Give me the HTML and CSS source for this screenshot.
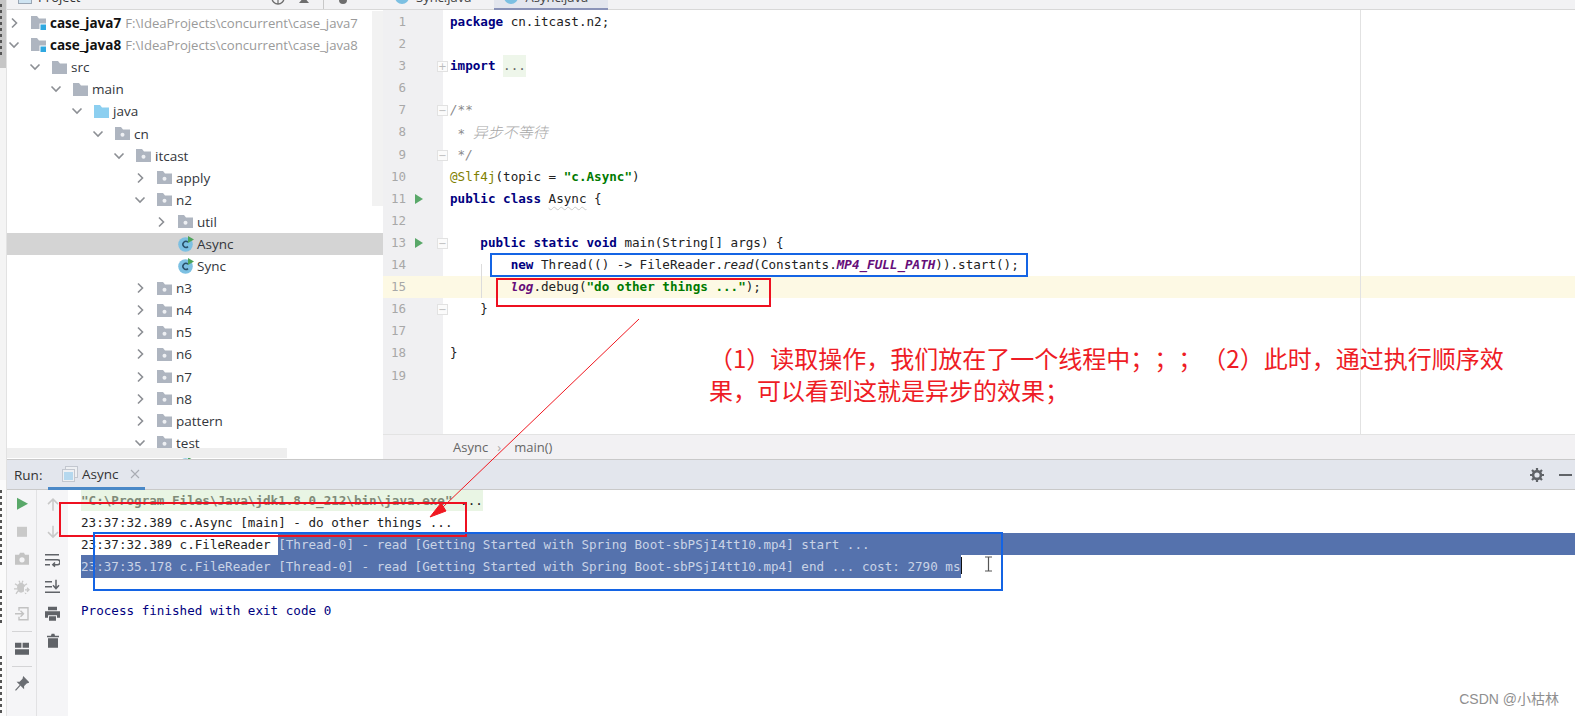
FILE: index.html
```html
<!DOCTYPE html>
<html lang="zh">
<head>
<meta charset="utf-8">
<title>Async.java</title>
<link rel="stylesheet" href="styles.css">
</head>
<body>
<svg class="defs" width="0" height="0" aria-hidden="true">
  <symbol id="chev-r" viewBox="0 0 12 12"><path d="M4 1.5 8.5 6 4 10.5" fill="none" stroke="#8c8f94" stroke-width="1.6"/></symbol>
  <symbol id="chev-d" viewBox="0 0 12 12"><path d="M1.5 3.5 6 8 10.5 3.5" fill="none" stroke="#8c8f94" stroke-width="1.6"/></symbol>
  <symbol id="folder" viewBox="0 0 15 13"><path d="M0 0H6L8 2.5H15V13H0Z" fill="#aeb5c0"/></symbol>
  <symbol id="pkg" viewBox="0 0 15 13"><path d="M0 0H6L8 2.5H15V13H0Z" fill="#aeb5c0"/><circle cx="7.5" cy="7.8" r="2" fill="#eef0f3"/></symbol>
  <symbol id="src" viewBox="0 0 15 13"><path d="M0 0H6L8 2.5H15V13H0Z" fill="#8ccff0"/></symbol>
  <symbol id="module" viewBox="0 0 15 15"><path d="M0 0H6L8 2.5H15V13H0Z" fill="#aeb5c0"/><rect x="9" y="8" width="6.5" height="6.5" fill="#2fa8e0" stroke="#fff"/></symbol>
  <symbol id="cls" viewBox="0 0 16 16"><circle cx="7.5" cy="8.5" r="7.3" fill="#7cc0e2"/><path d="M10 6.2A3 3 0 1 0 10 10.600" fill="none" stroke="#29506a" stroke-width="1.5"/><path d="M10 0 16 3.5 10 7Z" fill="#4ca35a"/></symbol>
</svg>
<div class="app">
  <aside class="strip">
    <div class="strip-top"><i class="dash dash-a"></i></div>
    <div class="strip-mid"></div>
    <div class="strip-low"><i class="dash dash-b"></i><i class="dash dash-c"></i><i class="dash dash-d"></i></div>
  </aside>
  <div class="main">
    <div class="top">
      <section class="project">
        <header class="proj-head">
          <span class="proj-title"><span class="proj-icon"></span>Project</span>
          <span class="proj-tools">
            <svg class="tool-ic" width="14" height="14" viewBox="0 0 14 14"><circle cx="7" cy="7" r="6" fill="none" stroke="#6e6e6e" stroke-width="1.4"/><path d="M7 1V13M1 7H13" stroke="#6e6e6e" stroke-width="1.2"/></svg>
            <svg class="tool-ic" width="14" height="14" viewBox="0 0 14 14"><path d="M2 12H12L7 6Z" fill="#6e6e6e"/></svg>
            <i class="tool-sep"></i>
            <svg class="tool-ic" width="14" height="14" viewBox="0 0 14 14"><circle cx="7" cy="9" r="4" fill="#6e6e6e"/></svg>
          </span>
        </header>
        <div class="tree">
          <div class="row d0"><svg class="chev"><use href="#chev-r"/></svg><svg class="ic mod"><use href="#module"/></svg><b class="mod-name">case_java7</b><span class="path">F:\IdeaProjects\concurrent\case_java7</span></div>
          <div class="row d0"><svg class="chev"><use href="#chev-d"/></svg><svg class="ic mod"><use href="#module"/></svg><b class="mod-name">case_java8</b><span class="path">F:\IdeaProjects\concurrent\case_java8</span></div>
          <div class="row d1"><svg class="chev"><use href="#chev-d"/></svg><svg class="ic"><use href="#folder"/></svg>src</div>
          <div class="row d2"><svg class="chev"><use href="#chev-d"/></svg><svg class="ic"><use href="#folder"/></svg>main</div>
          <div class="row d3"><svg class="chev"><use href="#chev-d"/></svg><svg class="ic"><use href="#src"/></svg>java</div>
          <div class="row d4"><svg class="chev"><use href="#chev-d"/></svg><svg class="ic"><use href="#pkg"/></svg>cn</div>
          <div class="row d5"><svg class="chev"><use href="#chev-d"/></svg><svg class="ic"><use href="#pkg"/></svg>itcast</div>
          <div class="row d6"><svg class="chev"><use href="#chev-r"/></svg><svg class="ic"><use href="#pkg"/></svg>apply</div>
          <div class="row d6"><svg class="chev"><use href="#chev-d"/></svg><svg class="ic"><use href="#pkg"/></svg>n2</div>
          <div class="row d7"><svg class="chev"><use href="#chev-r"/></svg><svg class="ic"><use href="#pkg"/></svg>util</div>
          <div class="row d7 selected"><span class="chev"></span><svg class="ic cls"><use href="#cls"/></svg>Async</div>
          <div class="row d7"><span class="chev"></span><svg class="ic cls"><use href="#cls"/></svg>Sync</div>
          <div class="row d6"><svg class="chev"><use href="#chev-r"/></svg><svg class="ic"><use href="#pkg"/></svg>n3</div>
          <div class="row d6"><svg class="chev"><use href="#chev-r"/></svg><svg class="ic"><use href="#pkg"/></svg>n4</div>
          <div class="row d6"><svg class="chev"><use href="#chev-r"/></svg><svg class="ic"><use href="#pkg"/></svg>n5</div>
          <div class="row d6"><svg class="chev"><use href="#chev-r"/></svg><svg class="ic"><use href="#pkg"/></svg>n6</div>
          <div class="row d6"><svg class="chev"><use href="#chev-r"/></svg><svg class="ic"><use href="#pkg"/></svg>n7</div>
          <div class="row d6"><svg class="chev"><use href="#chev-r"/></svg><svg class="ic"><use href="#pkg"/></svg>n8</div>
          <div class="row d6"><svg class="chev"><use href="#chev-r"/></svg><svg class="ic"><use href="#pkg"/></svg>pattern</div>
          <div class="row d6"><svg class="chev"><use href="#chev-d"/></svg><svg class="ic"><use href="#pkg"/></svg>test</div>
          <div class="row d7"><span class="chev"></span><svg class="ic cls"><use href="#cls"/></svg></div>
        </div>
        <div class="vscroll"></div>
        <div class="hscroll"></div>
      </section>
      <section class="editor">
        <header class="tabs">
          <span class="tab"><i class="tab-ic"></i>Sync.java</span>
          <span class="tab active"><i class="tab-ic"></i>Async.java</span>
        </header>
        <div class="code">
          <div class="margin-line"></div>
          <div class="guide"></div>
          <div class="ln"><span class="gut">1</span><code><b class="k">package</b> cn.itcast.n2;</code></div>
          <div class="ln"><span class="gut">2</span><code></code></div>
          <div class="ln"><span class="gut">3<i class="fold">+</i></span><code><b class="k">import</b> <span class="collapsed">...</span></code></div>
          <div class="ln"><span class="gut">6</span><code></code></div>
          <div class="ln"><span class="gut">7<i class="fold">−</i></span><code><span class="c">/**</span></code></div>
          <div class="ln"><span class="gut">8</span><code><span class="c"> * <span class="c-cjk">异步不等待</span></span></code></div>
          <div class="ln"><span class="gut">9<i class="fold">−</i></span><code><span class="c"> */</span></code></div>
          <div class="ln"><span class="gut">10</span><code><span class="a">@Slf4j</span>(topic = <b class="s">"c.Async"</b>)</code></div>
          <div class="ln"><span class="gut">11<svg class="run" width="10" height="12" viewBox="0 0 10 12"><path d="M1 1 9 6 1 11Z"/></svg></span><code><b class="k">public class</b> <span class="warn">Async</span> {</code></div>
          <div class="ln"><span class="gut">12</span><code></code></div>
          <div class="ln"><span class="gut">13<svg class="run" width="10" height="12" viewBox="0 0 10 12"><path d="M1 1 9 6 1 11Z"/></svg><i class="fold">−</i></span><code>    <b class="k">public static void</b> main(String[] args) {</code></div>
          <div class="ln"><span class="gut">14</span><code>        <b class="k">new</b> Thread(() -&gt; FileReader.<em>read</em>(Constants.<b class="f">MP4_FULL_PATH</b>)).start();</code></div>
          <div class="ln current"><span class="gut">15</span><code>        <b class="f">log</b>.debug(<b class="s">"do other things ..."</b>);</code></div>
          <div class="ln"><span class="gut">16<i class="fold">−</i></span><code>    }</code></div>
          <div class="ln"><span class="gut">17</span><code></code></div>
          <div class="ln"><span class="gut">18</span><code>}</code></div>
          <div class="ln"><span class="gut">19</span><code></code></div>
        </div>
        <footer class="crumbs"><span>Async</span><span class="crumb-sep">›</span><span>main()</span></footer>
      </section>
    </div>
    <section class="run-panel">
      <header class="run-head">
        <span class="run-label">Run:</span>
        <span class="run-tab">
          <svg class="run-tab-ic" width="16" height="16" viewBox="0 0 16 16"><rect x="3.5" y="0.5" width="12" height="11" fill="#eef0f3" stroke="#c3c7cf"/><rect x="0.5" y="3.5" width="12" height="12" fill="#eef0f3" stroke="#c3c7cf"/><rect x="2" y="6" width="9" height="8" fill="#b5d8ee"/></svg>
          Async
          <svg class="run-close" width="10" height="10" viewBox="0 0 10 10"><path d="M1 1 9 9M9 1 1 9" stroke="#a9adb4" stroke-width="1.1"/></svg>
        </span>
        <span class="run-right">
          <svg width="14" height="14" viewBox="0 0 14 14"><circle cx="7" cy="7" r="3.9" fill="none" stroke="#606368" stroke-width="2.6"/><path d="M7 0V3M7 11V14M0 7H3M11 7H14M2 2 4 4M10 10 12 12M12 2 10 4M4 10 2 12" stroke="#606368" stroke-width="2.2"/></svg>
          <svg width="14" height="14" viewBox="0 0 14 14"><path d="M1 7H14" stroke="#606368" stroke-width="2"/></svg>
        </span>
      </header>
      <div class="run-body">
        <div class="tb tb-a">
          <svg width="14" height="14" viewBox="0 0 14 14"><path d="M2 1 13 7 2 13Z" fill="#59a869"/></svg>
          <svg width="14" height="14" viewBox="0 0 14 14"><rect x="2" y="2" width="10" height="10" fill="#c9c9c9"/></svg>
          <svg width="16" height="14" viewBox="0 0 16 14"><path d="M1 3H5L6 1H10L11 3H15V13H1Z" fill="#c4c4c4"/><circle cx="8" cy="8" r="2.6" fill="#f5f5f7"/></svg>
          <svg width="16" height="16" viewBox="0 0 16 16"><ellipse cx="7" cy="9" rx="4" ry="5" fill="#c8c8c8"/><path d="M1 5 4 7M13 5 10 7M0 10H3M11 10H14M2 15 4 12M12 15 10 12M5 2 6 4M9 2 8 4" stroke="#c8c8c8" stroke-width="1.3"/><path d="M10 8H16V14H10Z" fill="#f5f5f7"/><path d="M11 11H15M13 9 15 11 13 13" stroke="#c8c8c8" stroke-width="1.3" fill="none"/></svg>
          <svg width="16" height="16" viewBox="0 0 16 16"><path d="M5 5V2H14V14H5V11" fill="none" stroke="#c2c2c2" stroke-width="1.4"/><path d="M1 8H9M6.5 5 9.5 8 6.5 11" fill="none" stroke="#c2c2c2" stroke-width="1.4"/></svg>
          <i class="tb-sep"></i>
          <svg width="14" height="12" viewBox="0 0 14 12"><path d="M0 0H6.4V5H0ZM7.6 0H14V5H7.6ZM0 6.4H14V12H0Z" fill="#606368"/></svg>
          <i class="tb-sep"></i>
          <svg width="14" height="14" viewBox="0 0 14 14"><path d="M8.5 0.5 13.5 5.500 11.5 6 8.500 9 8.500 11 3 5.500 5 5.500 8 2.500ZM5 8.500 0.500 13.500" fill="#6a6d72" stroke="#6a6d72" stroke-width="1.2"/></svg>
        </div>
        <div class="tb tb-b">
          <svg width="12" height="14" viewBox="0 0 12 14"><path d="M6 13V2M1 6.5 6 1.5 11 6.5" fill="none" stroke="#c8c8c8" stroke-width="1.5"/></svg>
          <svg width="12" height="14" viewBox="0 0 12 14"><path d="M6 1V12M1 7.5 6 12.5 11 7.5" fill="none" stroke="#c8c8c8" stroke-width="1.5"/></svg>
          <svg width="15" height="14" viewBox="0 0 15 14"><path d="M0 2H14M0 7H12.500A2.500 2.500 0 0 1 12.500 12H8M10 9.800 7.800 12 10 14M0 12H5" fill="none" stroke="#606368" stroke-width="1.5"/></svg>
          <svg width="15" height="14" viewBox="0 0 15 14"><path d="M0 2H7M0 7H7M0 12.500H15M11 0V8M8 5.500 11 9 14 5.500" fill="none" stroke="#606368" stroke-width="1.5"/></svg>
          <svg width="15" height="14" viewBox="0 0 15 14"><path d="M3 0H12V3.500H3ZM0 4.500H15V11H12V8.500H3V11H0ZM4 9.500H11V14H4Z" fill="#606368"/></svg>
          <svg width="12" height="14" viewBox="0 0 12 14"><path d="M0 2H4L4.600 0H7.400L8 2H12V3.500H0ZM1 4.500H11V14H1Z" fill="#606368"/></svg>
        </div>
        <div class="console">
          <span class="cl cmd"><span class="cmd-text">"C:\Program Files\Java\jdk1.8.0_212\bin\java.exe"</span> ...</span>
          <span class="cl">23:37:32.389 c.Async [main] - do other things ...</span>
          <span class="cl sel-full"><span class="unsel">23:37:32.389 c.FileReader </span>[Thread-0] - read [Getting Started with Spring Boot-sbPSjI4tt10.mp4] start ...</span>
          <span class="cl"><span class="sel">23:37:35.178 c.FileReader [Thread-0] - read [Getting Started with Spring Boot-sbPSjI4tt10.mp4] end ... cost: 2790 ms</span><i class="caret"></i></span>
          <span class="cl"> </span>
          <span class="cl exit">Process finished with exit code 0</span>
        </div>
      </div>
    </section>
  </div>

  <i class="box blue code-blue"></i>
  <i class="box red code-red"></i>
  <i class="box red con-red"></i>
  <i class="box blue con-blue"></i>
  <svg class="arrow" width="260" height="230" viewBox="0 0 260 230"><path d="M227 3 31 191" stroke="#f01820" stroke-width="1" fill="none"/><path d="M18 201 34 195 29 187Z" fill="#f01820" stroke="#f01820"/></svg>
  <svg class="ibeam" width="9" height="16" viewBox="0 0 9 16"><path d="M1 1H8M4.500 1V15M1 15H8" stroke="#555" stroke-width="1.2" fill="none"/></svg>
  <p class="note">（1）读取操作，我们放在了一个线程中；；；（2）此时，通过执行顺序效<br>果，可以看到这就是异步的效果；</p>
  <span class="credit">CSDN @小枯林</span>
</div>
</body>
</html>
```
FILE: styles.css
```css
* { box-sizing: border-box; }
html, body { margin: 0; padding: 0; background: #fff; }
.defs { position: absolute; }
.app {
  position: relative;
  display: flex;
  width: 1575px;
  height: 716px;
  overflow: hidden;
  font-family: "Open Sans", "Noto Sans", sans-serif;
  font-size: 13px;
  color: #2b2b2b;
}

/* far-left tool strip: only a sliver of its rotated labels is visible */
.strip {
  width: 7px;
  flex: none;
  display: flex;
  flex-direction: column;
  background: #f4f4f4;
  border-right: 1px solid #e2e2e2;
  overflow: hidden;
}
.strip-top { height: 68px; flex: none; background: #c6c6c6; padding-top: 4px; }
.strip-mid { height: 412px; flex: none; }
.strip-low { flex: 1; background: #fbfbfb; padding-top: 10px; }
.dash {
  display: block;
  width: 2px;
  background: repeating-linear-gradient(180deg, #555 0 3px, transparent 3px 6px);
}
.dash-a { height: 52px; }
.dash-b { height: 78px; margin-bottom: 22px; }
.dash-c { height: 36px; margin-bottom: 30px; }
.dash-d { height: 60px; }

.main { flex: 1; min-width: 0; display: flex; flex-direction: column; }
.top { height: 460px; flex: none; display: flex; border-bottom: 1px solid #c9c9c9; }

/* project panel */
.project { width: 376px; flex: none; position: relative; display: flex; flex-direction: column; overflow: hidden; }
.proj-head {
  height: 10px; flex: none; display: flex; justify-content: space-between; align-items: flex-end;
  background: #f2f2f4; border-bottom: 1px solid #d8d8d8; padding: 0 33px 0 11px;
}
.proj-title { display: flex; align-items: center; gap: 6px; height: 16px; margin-bottom: 4px; color: #333; }
.proj-icon { width: 14px; height: 14px; background: #cfe4f2; border: 1px solid #9aa6b4; }
.proj-tools { display: flex; align-items: center; gap: 12px; height: 14px; margin-bottom: 4px; }
.tool-ic { flex: none; }
.tool-sep { width: 1px; height: 14px; background: #c8c8c8; margin-bottom: -8px; }
.tree { padding-top: 2px; }
.row {
  height: 22.1px; display: flex; align-items: center; white-space: nowrap; color: #33363b; font-size: 13.5px;
  padding-left: 1px;
}
.d1 { padding-left: 22px; } .d2 { padding-left: 43px; } .d3 { padding-left: 64px; }
.d4 { padding-left: 85px; } .d5 { padding-left: 106px; } .d6 { padding-left: 127px; } .d7 { padding-left: 148px; }
.row.selected { background: #d4d4d4; }
.chev { width: 12px; height: 12px; flex: none; margin-right: 11px; }
.ic { width: 15px; height: 13px; flex: none; margin-right: 4px; }
.ic.mod { height: 15px; margin-top: 1px; }
.ic.cls { width: 16px; height: 16px; margin-right: 3px; }
.mod-name { color: #111; font-weight: 700; font-size: 13.5px; }
.path { color: #9a9a9a; margin-left: 4px; font-size: 13.15px; }
.vscroll { position: absolute; right: 0; top: 11px; width: 11px; height: 195px; background: #f2f2f2; }
.hscroll { position: absolute; left: 0; bottom: 1px; width: 280px; height: 10px; background: #eeeeee; }

/* editor */
.editor { flex: 1; min-width: 0; display: flex; flex-direction: column; position: relative; }
.tabs {
  height: 10px; flex: none; display: flex; align-items: flex-end; background: #f2f2f4; border-bottom: 1px solid #d8d8d8;
  padding-left: 12px; color: #444; font-size: 13px;
}
.tab { display: flex; align-items: center; gap: 7px; height: 22px; padding: 0 26px 5px 0; white-space: nowrap; margin-bottom: -1px; }
.tab-ic { width: 14px; height: 14px; border-radius: 50%; background: #7cc0e2; }
.tab.active { width: 114px; padding: 0 0 3px 10px; margin-left: -3px; border-bottom: 2px solid #8a93b8; background: #e3e6ee; }
.code { flex: 1; position: relative; padding-top: 1px; font-family: "DejaVu Sans Mono", "Noto Sans CJK SC", monospace; font-size: 12.6px; overflow: hidden; }
.code::before { content: ""; position: absolute; left: 0; top: 0; bottom: 0; width: 60px; background: #f0f0f2; }
.margin-line { position: absolute; left: 977px; top: 0; bottom: 0; width: 1px; background: #e2e2e2; z-index: 1; }
.guide { position: absolute; left: 98px; top: 254px; height: 34px; width: 1px; background: #dcdcdc; z-index: 2; }
.ln { height: 22.1px; display: flex; position: relative; line-height: 22.1px; }
.ln.current { background: #fdf9e4; }
.gut { width: 60px; flex: none; position: relative; color: #a8a8a8; text-align: right; padding-right: 37px; font-family: "DejaVu Sans Mono", monospace; font-size: 12.5px; }
.current .gut { background: #fdf9e4; }
.ln code { font: inherit; white-space: pre; padding-left: 7px; color: #222; position: relative; z-index: 2; }
.fold {
  position: absolute; left: 54px; top: 6px; width: 11px; height: 11px; background: #fbfbfb; border: 1px solid #e2e2e2;
  font: 10px/9px "DejaVu Sans", sans-serif; color: #bbb; text-align: center; z-index: 3;
}
.run { position: absolute; left: 31px; top: 5px; fill: #59a869; }
.k { color: #000080; font-weight: 700; }
.s { color: #007a00; font-weight: 700; }
.c { color: #8a8a8a; font-style: italic; }
.c-cjk { font-size: 15px; font-family: "Noto Sans CJK SC", sans-serif; color: #a8a8a8; font-weight: 300; }
.a { color: #808000; }
.f { color: #660e7a; font-style: italic; font-weight: 700; }
.ln em { font-style: italic; }
.warn { text-decoration: underline wavy #c9c9c9 1px; text-underline-offset: 3px; }
.collapsed { display: inline-block; background: #eef6ea; color: #666; line-height: 22px; width: 23px; }
.crumbs {
  height: 25px; flex: none; display: flex; align-items: center; gap: 9px; background: #f2f1f3; border-top: 1px solid #e3e3e3;
  padding-left: 70px; color: #666; font-size: 13px;
}
.crumb-sep { color: #aaa; width: 8px; }

/* run panel */
.run-panel { flex: 1; display: flex; flex-direction: column; min-height: 0; }
.run-head {
  height: 30px; flex: none; display: flex; align-items: center; background: #e3e6ed; border-bottom: 1px solid #c9c9c9;
  padding-left: 7px; color: #333; font-size: 13.5px;
}
.run-label { width: 34px; }
.run-tab {
  display: flex; align-items: center; height: 30px; width: 97px; padding-left: 14px; border-bottom: 3px solid #4a88c7; gap: 4px; padding-top: 2px;
}
.run-close { margin-left: 8px; }
.run-right { margin-left: auto; display: flex; gap: 14px; padding-right: 3px; align-items: center; }
.run-body { flex: 1; display: flex; min-height: 0; }
.tb { flex: none; display: flex; flex-direction: column; align-items: center; background: #f5f5f7; }
.tb svg { flex: none; }
.tb-a { width: 30px; border-right: 1px solid #e2e2e4; }
.tb-a svg { height: 27.6px; }
.tb-b { width: 31px; padding-top: 1px; }
.tb-b svg { height: 27.3px; }
.tb-sep { width: 20px; height: 1px; background: #d4d4d6; flex: none; margin: 3px 0; }
.console {
  flex: 1; min-width: 0; padding-left: 13px; font-family: "DejaVu Sans Mono", monospace; font-size: 12.6px; color: #222;
  overflow: hidden;
}
.cl { display: block; height: 22px; line-height: 23px; white-space: pre; }
.cmd { background: #e9f5e4; width: 402px; margin-top: -1px; }
.cmd-text { color: #7f8a78; font-weight: 700; }
.sel-full { background: #5572ad; color: #c9d3e6; }
.unsel { background: #fff; color: #222; display: inline-block; }
.sel { background: #5572ad; color: #c9d3e6; display: inline-block; }
.caret { display: inline-block; width: 1px; height: 17px; background: #111; vertical-align: -3px; }
.exit { color: #000080; }

/* annotations laid over the screenshot */
.box { position: absolute; border: 2px solid; display: block; pointer-events: none; z-index: 5; }
.blue { border-color: #1464e4; }
.red { border-color: #ee1020; }
.code-blue { left: 490px; top: 253px; width: 538px; height: 24px; }
.code-red { left: 496px; top: 278px; width: 275px; height: 29px; }
.con-red { left: 59px; top: 502px; width: 408px; height: 35px; }
.con-blue { left: 93px; top: 532px; width: 910px; height: 59px; }
.arrow { position: absolute; left: 412px; top: 316px; z-index: 6; }
.ibeam { position: absolute; left: 984px; top: 556px; z-index: 6; }
.note {
  position: absolute; left: 709px; top: 342px; margin: 0; z-index: 6; white-space: nowrap;
  font-family: "Noto Sans CJK SC", sans-serif; font-size: 24px; line-height: 32px; color: #ee1c25;
  text-spacing-trim: space-all;
}
.credit {
  position: absolute; right: 16px; bottom: 8px; color: #8f8f8f; font: 14px "Liberation Sans", "Noto Sans CJK SC", sans-serif; z-index: 6;
}
```
